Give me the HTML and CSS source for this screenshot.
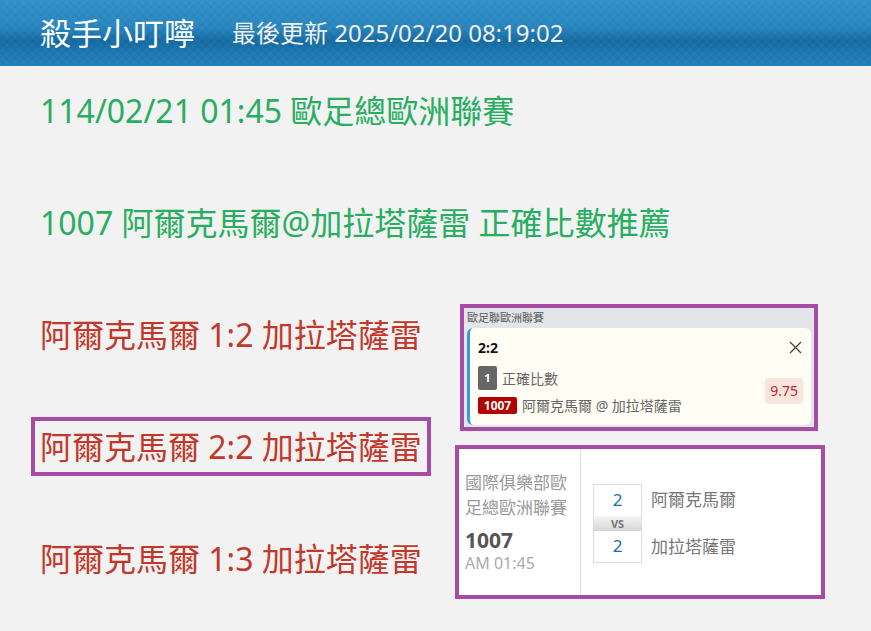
FILE: index.html
```html
<!DOCTYPE html>
<html>
  <head>
    <meta charset="utf-8">
    <meta name="viewport" content="width=device-width, initial-scale=1">
    <title>殺手小叮嚀</title>
    <link rel="stylesheet" href="styles.css">
  </head>
  <body>

    <header class="topbar">
      <h1 class="brand">殺手小叮嚀</h1>
      <span class="updated">最後更新 2025/02/20 08:19:02</span>
    </header>

    <main class="content">
      <section class="tips">
        <p class="tip tip-info">114/02/21 01:45 歐足總歐洲聯賽</p>
        <p class="tip tip-info">1007 阿爾克馬爾@加拉塔薩雷 正確比數推薦</p>
        <p class="tip tip-score">阿爾克馬爾 1:2 加拉塔薩雷</p>
        <p class="tip tip-score"><span class="mark">阿爾克馬爾 2:2 加拉塔薩雷</span></p>
        <p class="tip tip-score">阿爾克馬爾 1:3 加拉塔薩雷</p>
      </section>

      <aside class="shots">
        <div class="shot slip">
          <div class="slip-league">歐足聯歐洲聯賽</div>
          <div class="slip-card">
            <div class="slip-head">
              <span class="slip-pick">2:2</span>
              <svg class="slip-close" width="13" height="13" viewBox="0 0 13 13">
                <path d="M1 1 L12 12 M12 1 L1 12" stroke="#444" stroke-width="1.3" fill="none"/>
              </svg>
            </div>
            <div class="slip-body">
              <div class="slip-lines">
                <div class="slip-row">
                  <span class="tag tag-rank">1</span>
                  <span class="slip-text">正確比數</span>
                </div>
                <div class="slip-row">
                  <span class="tag tag-code">1007</span>
                  <span class="slip-text">阿爾克馬爾 @ 加拉塔薩雷</span>
                </div>
              </div>
              <span class="odds">9.75</span>
            </div>
          </div>
        </div>

        <div class="shot match">
          <div class="match-info">
            <div class="match-league">國際俱樂部歐足總歐洲聯賽</div>
            <div class="match-code">1007</div>
            <div class="match-time">AM 01:45</div>
          </div>
          <div class="match-board">
            <div class="score score-home">2</div>
            <div class="team team-home">阿爾克馬爾</div>
            <div class="vs">VS</div>
            <div class="score score-away">2</div>
            <div class="team team-away">加拉塔薩雷</div>
          </div>
        </div>
      </aside>
    </main>

  </body>
</html>
```

FILE: styles.css
```css
body {
  margin: 0;
  background: #f2f2f2;
  font-family: "Noto Sans", "Noto Sans CJK TC", sans-serif;
}

.topbar {
  height: 66px;
  display: flex;
  align-items: center;
  padding-left: 40px;
  gap: 37px;
  background:
    repeating-linear-gradient(45deg, rgba(255, 255, 255, 0.025) 0 3px, transparent 3px 6px),
    repeating-linear-gradient(-45deg, rgba(255, 255, 255, 0.025) 0 3px, transparent 3px 6px),
    linear-gradient(to bottom, #2d8fc7 0%, #2683bd 40%, #12699f 62%, #1b77b1 85%, #1f7db7 100%);
  color: #fff;
}

.brand {
  margin: 0;
  font-size: 31px;
  font-weight: normal;
  line-height: 40px;
}

.updated {
  font-size: 24px;
  color: #f0f0f0;
  line-height: 40px;
}

.content {
  display: flex;
  padding: 23px 0 0 40px;
}

.tips {
  flex: 0 0 415px;
  min-width: 0;
}

.tip {
  margin: 0 0 68px;
  height: 44px;
  line-height: 44px;
  font-size: 32px;
  white-space: nowrap;
}

.tip-info {
  color: #27ae60;
}

.tip-score {
  color: #c0392b;
}

.mark {
  display: inline-block;
  line-height: 41px;
  outline: 4px solid #a64ca6;
  outline-offset: 5px;
}

.shots {
  display: flex;
  flex-direction: column;
}

.shot {
  box-sizing: border-box;
  border: 4px solid #a64ca6;
}

/* bet slip */
.slip {
  width: 358px;
  height: 127px;
  margin: 215px 0 0 5px;
  padding: 0 3px 2px;
  background: #e4e5e9;
}

.slip-league {
  height: 20px;
  line-height: 20px;
  font-size: 11px;
  color: #555;
}

.slip-card {
  height: 97px;
  box-sizing: border-box;
  padding: 12px 9px 13px 8px;
  background: #fffdf4;
  border-left: 3px solid #3a9ad9;
  border-radius: 6px;
}

.slip-head {
  display: flex;
  justify-content: space-between;
  align-items: center;
  height: 14px;
}

.slip-pick {
  font-size: 14px;
  font-weight: bold;
  color: #111;
}

.slip-body {
  display: flex;
  align-items: center;
  justify-content: space-between;
  margin-top: 12px;
}

.slip-row {
  display: flex;
  align-items: center;
  gap: 5px;
}

.slip-row + .slip-row {
  margin-top: 5px;
}

.tag {
  display: inline-block;
  color: #fff;
  font-weight: bold;
  text-align: center;
  border-radius: 2px;
}

.tag-rank {
  width: 19px;
  height: 24px;
  line-height: 24px;
  font-size: 11px;
  background: #666;
}

.tag-code {
  width: 39px;
  height: 17px;
  line-height: 17px;
  font-size: 12px;
  background: #b30000;
}

.slip-text {
  font-size: 14px;
  color: #666;
}

.odds {
  height: 26px;
  line-height: 26px;
  padding: 0 5px;
  font-size: 14px;
  color: #c0282d;
  background: #f7e5de;
  border-radius: 4px;
  margin-right: -1px;
}

/* match card */
.match {
  display: flex;
  width: 370px;
  height: 154px;
  margin-top: 14px;
  background: #fff;
}

.match-info {
  flex: 0 0 122px;
  box-sizing: border-box;
  padding: 21px 0 0 6px;
  border-right: 1px solid #ddd;
}

.match-league {
  font-size: 17px;
  line-height: 25px;
  color: #999;
}

.match-code {
  margin-top: 7px;
  font-size: 21px;
  line-height: 26px;
  font-weight: bold;
  color: #555;
}

.match-time {
  font-size: 16px;
  line-height: 20px;
  color: #aaa;
}

.match-board {
  display: grid;
  grid-template-columns: 49px auto;
  grid-template-rows: 32px 15px 32px;
  column-gap: 9px;
  align-content: start;
  padding: 35px 0 0 12px;
}

.score {
  grid-column: 1;
  box-sizing: border-box;
  border: 1px solid #ddd;
  text-align: center;
  font-size: 17px;
  line-height: 30px;
  color: #1a6ea8;
}

.score-home {
  grid-row: 1;
  border-bottom: none;
}

.score-away {
  grid-row: 3;
  border-top: none;
}

.vs {
  grid-row: 2;
  grid-column: 1;
  box-sizing: border-box;
  border-left: 1px solid #ddd;
  border-right: 1px solid #ddd;
  background: linear-gradient(to bottom, #f4f4f4, #d6d6d6);
  text-align: center;
  font-size: 11px;
  font-weight: bold;
  line-height: 15px;
  color: #777;
}

.team {
  grid-column: 2;
  font-size: 17px;
  line-height: 32px;
  color: #777;
}

.team-home {
  grid-row: 1;
}

.team-away {
  grid-row: 3;
}
```
